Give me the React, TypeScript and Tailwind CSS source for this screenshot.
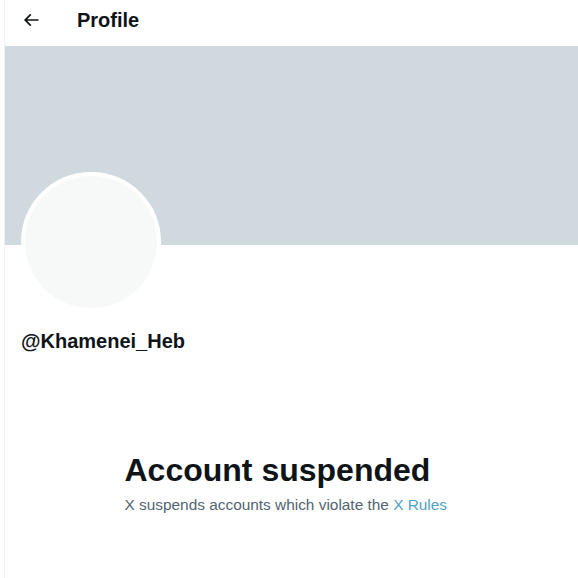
import React from 'react';

const font = { fontFamily: '"Liberation Sans", Arial, sans-serif' };

function BackArrow() {
  return (
    <svg viewBox="0 0 24 24" className="h-5 w-5 fill-[#0f1419]">
      <path d="M7.414 13l5.043 5.04-1.414 1.42L3.586 12l7.457-7.46 1.414 1.42L7.414 11H21v2H7.414z" />
    </svg>
  );
}

export default function App() {
  return (
    <div className="min-h-[578px] w-[578px] bg-white pl-1" style={font}>
      <div className="flex min-h-[578px] flex-col border-l border-[#eff3f4]">
        <header className="flex h-[46px] items-center pb-[7px]">
          <div className="flex w-[72px] items-center pl-4">
            <BackArrow />
          </div>
          <h2 className="text-[20px] font-bold text-[#0f1419]">Profile</h2>
        </header>

        <div className="h-[199px] bg-[#cfd9de]" />

        <div className="px-4">
          <div className="-mt-[73px] h-[140px] w-[140px] rounded-full border-4 border-white bg-[#f7f9f9]" />
          <div className="mt-[14px] text-[20px] font-bold text-[#0f1419]">@Khamenei_Heb</div>
        </div>

        <div className="mx-auto mt-[96px] w-[334px]">
          <h1 className="text-[32px] font-bold leading-9 text-[#0f1419]">Account suspended</h1>
          <p className="mt-[5px] text-[15.4px] text-[#536471]">
            X suspends accounts which violate the{' '}
            <span className="text-[#4fa3c7]">X Rules</span>
          </p>
        </div>
      </div>
    </div>
  );
}
